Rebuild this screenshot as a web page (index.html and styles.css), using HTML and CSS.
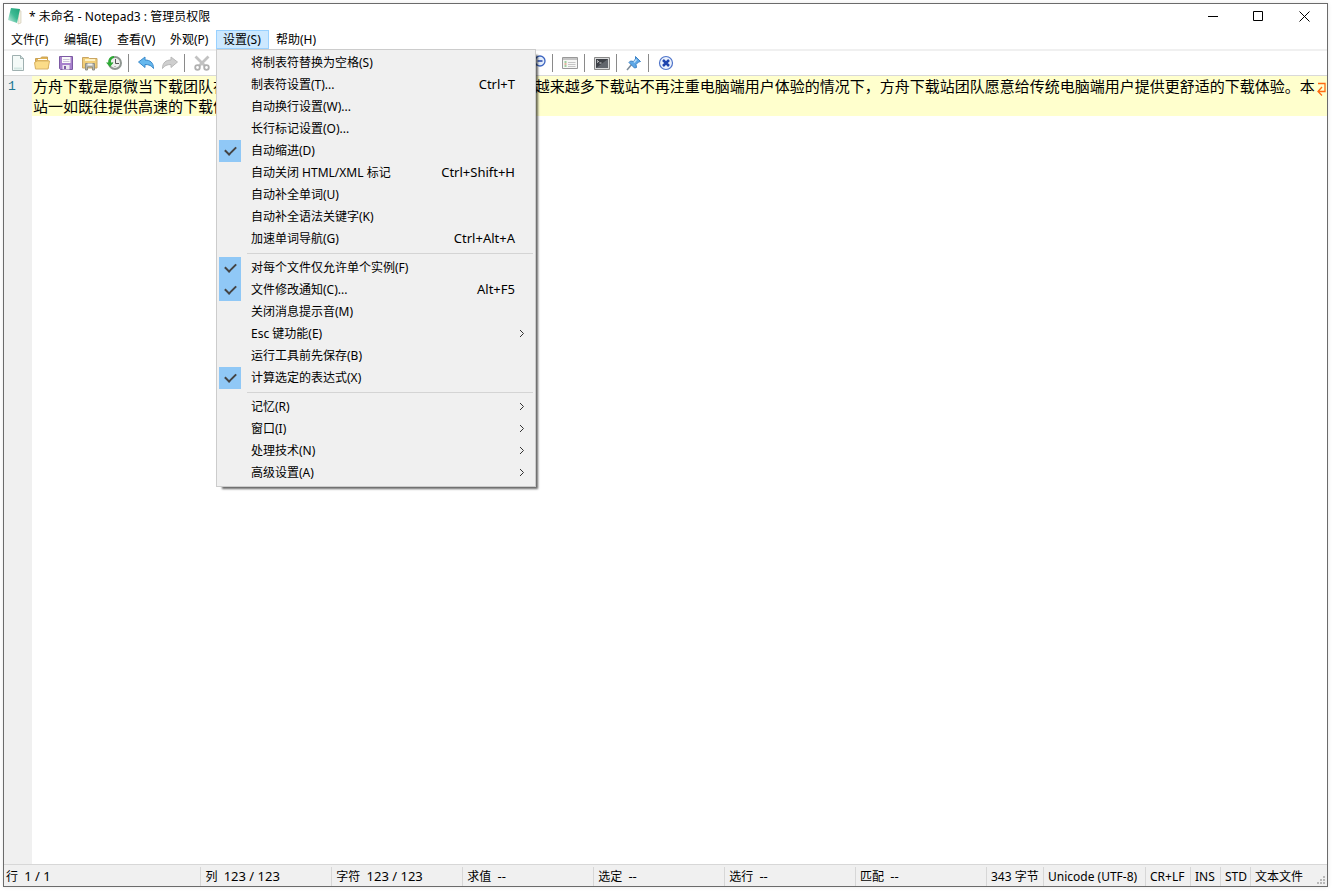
FILE: index.html
```
<!DOCTYPE html>
<html lang="zh-CN">
<head>
  <meta charset="UTF-8">
  <meta name="viewport" content="width=device-width, initial-scale=1.0">
  <title>* 未命名 - Notepad3</title>
  <link rel="stylesheet" href="styles.css">
</head>
<body>
  <div class="window">
    <header class="titlebar">
      <svg class="app-icon" width="16" height="18" viewBox="0 0 16 18">
        <defs>
          <linearGradient id="page" x1="1" y1="0" x2="0" y2="1">
            <stop offset="0" stop-color="#1ea077"/>
            <stop offset=".5" stop-color="#3dba93"/>
            <stop offset="1" stop-color="#d3efe6"/>
          </linearGradient>
        </defs>
        <path d="M12 3l2 1v12l-3 1z" fill="#f3efe2" stroke="#cfc8ae" stroke-width=".6"/>
        <path d="M4 1l9 1-3 14-9-3z" fill="url(#page)"/>
      </svg>
      <h1 class="title">* 未命名 - Notepad3 : 管理员权限</h1>
      <div class="window-buttons">
        <button aria-label="最小化"><svg width="11" height="11"><path d="M1 5.500h10" stroke="#000"/></svg></button>
        <button aria-label="最大化"><svg width="11" height="11"><path d="M.5 .5h9v9h-9z" fill="none" stroke="#000"/></svg></button>
        <button aria-label="关闭"><svg width="11" height="11"><path d="M.5 .5l10 10M10.500 .5l-10 10" stroke="#000"/></svg></button>
      </div>
    </header>

    <nav class="menubar">
      <div class="menu"><button class="menu-name">文件(F)</button></div>
      <div class="menu"><button class="menu-name">编辑(E)</button></div>
      <div class="menu"><button class="menu-name">查看(V)</button></div>
      <div class="menu"><button class="menu-name">外观(P)</button></div>
      <div class="menu open">
        <button class="menu-name" aria-expanded="true">设置(S)</button>
        <div class="dropdown">
          <button class="item">将制表符替换为空格(S)</button>
          <button class="item">制表符设置(T)...<kbd>Ctrl+T</kbd></button>
          <button class="item">自动换行设置(W)...</button>
          <button class="item">长行标记设置(O)...</button>
          <label class="item"><input type="checkbox" checked>自动缩进(D)</label>
          <label class="item"><input type="checkbox">自动关闭 HTML/XML 标记<kbd>Ctrl+Shift+H</kbd></label>
          <label class="item"><input type="checkbox">自动补全单词(U)</label>
          <label class="item"><input type="checkbox">自动补全语法关键字(K)</label>
          <label class="item"><input type="checkbox">加速单词导航(G)<kbd>Ctrl+Alt+A</kbd></label>
          <hr>
          <label class="item"><input type="checkbox" checked>对每个文件仅允许单个实例(F)</label>
          <label class="item"><input type="checkbox" checked>文件修改通知(C)...<kbd>Alt+F5</kbd></label>
          <label class="item"><input type="checkbox">关闭消息提示音(M)</label>
          <button class="item">Esc 键功能(E)<svg class="arrow" width="6" height="9"><path d="M1 1l3.500 3.500L1 8"/></svg></button>
          <label class="item"><input type="checkbox">运行工具前先保存(B)</label>
          <label class="item"><input type="checkbox" checked>计算选定的表达式(X)</label>
          <hr>
          <button class="item">记忆(R)<svg class="arrow" width="6" height="9"><path d="M1 1l3.500 3.500L1 8"/></svg></button>
          <button class="item">窗口(I)<svg class="arrow" width="6" height="9"><path d="M1 1l3.500 3.500L1 8"/></svg></button>
          <button class="item">处理技术(N)<svg class="arrow" width="6" height="9"><path d="M1 1l3.500 3.500L1 8"/></svg></button>
          <button class="item">高级设置(A)<svg class="arrow" width="6" height="9"><path d="M1 1l3.500 3.500L1 8"/></svg></button>
        </div>
      </div>
      <div class="menu"><button class="menu-name">帮助(H)</button></div>
    </nav>

    <div class="toolbar">
      <button aria-label="新建"><svg viewBox="0 0 16 16">
        <path d="M2.500 .5h8l3 3v12h-11z" fill="#f4faf8" stroke="#9fb0b0"/>
        <path d="M10.500 .5v3h3" fill="#cfe0df" stroke="#9fb0b0"/>
        <path d="M4 13.500h8" stroke="#d5e8e4" stroke-width="2"/>
      </svg></button>
      <button aria-label="打开"><svg viewBox="0 0 16 16">
        <path d="M1.500 13V3.500h5l1-1.500h6v3l1 1v7z" fill="#e2b454" stroke="#c9a256"/>
        <path d="M4 4.500h9" stroke="#fff"/>
        <path d="M.5 7.500l3-1.500h12l-1.500 8h-12.500z" fill="#fbdc88" stroke="#d8b366"/>
      </svg></button>
      <button aria-label="保存"><svg viewBox="0 0 16 16">
        <path d="M1.500 1.500h13v13h-12l-1-1z" fill="#a780cc" stroke="#7c5aa3"/>
        <path d="M4 2h8.500v6H4z" fill="#fafafa"/>
        <path d="M5 4.500h6.500M5 6.500h6.500" stroke="#ccc4d8"/>
        <path d="M4.500 10h7v4.500h-7z" fill="#ece8f0"/>
        <path d="M6 11h2v3H6z" fill="#7c5aa3"/>
      </svg></button>
      <button aria-label="另存为"><svg viewBox="0 0 16 16">
        <path d="M.5 13V2.500h6l1 1h7.500v9.500z" fill="#f0cd78" stroke="#c9a563"/>
        <path d="M3 5h10" stroke="#fff2c4" stroke-width="2"/>
        <path d="M3.500 15V8.500h9V15h-2v-3h-5v3z" fill="#b4b4ad" stroke="#919184"/>
        <path d="M5.500 9.500h5" stroke="#f2f2ef" stroke-width="2"/>
      </svg></button>
      <button aria-label="还原"><svg viewBox="0 0 16 16">
        <circle cx="9" cy="8" r="6" fill="#eeefed" stroke="#8f9691" stroke-width="2"/>
        <path d="M9.500 4v4.500H13" fill="none" stroke="#555"/>
        <path d="M9 11v1M6 8h1" stroke="#888"/>
        <path d="M8 1C4 1 2 4 2.500 7.500H0L4 12l3.500-4.500H5C4.500 5 6 3 8 3z" fill="#2dab35"/>
      </svg></button>
      <span class="sep"></span>
      <button aria-label="撤销"><svg viewBox="0 0 16 16">
        <path d="M.5 7L7 2v3c5 0 8.500 2.500 8.500 8.500C13.500 10.500 11 9.500 7 9.500v3z" fill="#65b8ee" stroke="#3b8acb"/>
      </svg></button>
      <button aria-label="重做"><svg viewBox="0 0 16 16">
        <path d="M15.500 7L9 2v3C4 5 .5 7.500 .5 13.500 2.500 10.500 5 9.500 9 9.500v3z" fill="#cfcfcf" stroke="#b8b8b8"/>
      </svg></button>
      <span class="sep"></span>
      <button aria-label="剪切"><svg viewBox="0 0 16 16">
        <path d="M1.500 1.500l9.500 9.500M14.500 1.500l-9.500 9.500" stroke="#c2c2c2" stroke-width="2.800"/>
        <circle cx="3.500" cy="12.500" r="2.300" fill="#fff" stroke="#b0b0b0" stroke-width="1.800"/>
        <circle cx="12.500" cy="12.500" r="2.300" fill="#fff" stroke="#b0b0b0" stroke-width="1.800"/>
      </svg></button>
      <span class="covered"></span>
      <button aria-label="缩小"><svg viewBox="0 0 16 16">
        <path d="M6 10l-4.500 4.500" stroke="#7a6a50" stroke-width="2"/>
        <circle cx="10" cy="6" r="5" fill="#e3edfb" stroke="#3c64c0" stroke-width="1.300"/>
        <path d="M7.500 6h5" stroke="#2445a8" stroke-width="1.500"/>
      </svg></button>
      <span class="sep"></span>
      <button aria-label="配置方案"><svg viewBox="0 0 16 16">
        <path d="M.5 2.500h15v11H.5z" fill="#f7f7f5" stroke="#999"/>
        <path d="M1 4h14" stroke="#c4c4c4" stroke-width="2"/>
        <path d="M2.500 7h2" stroke="#49a84f"/><path d="M2.500 9h2" stroke="#d0704c"/><path d="M2.500 11h2" stroke="#49a84f"/>
        <path d="M6 7.500h7.500M6 9.500h7.500M6 11.500h7.500" stroke="#c5c5c5"/>
      </svg></button>
      <span class="sep"></span>
      <button aria-label="命令提示符"><svg viewBox="0 0 16 16">
        <path d="M.5 2.500h15v12H.5z" fill="#d9dadb" stroke="#888"/>
        <path d="M2 4h12v9H2z" fill="#3d4046"/>
        <path d="M2 13L14 4v9z" fill="#62666d"/>
        <path d="M3 5.500l1.500 1-1.500 1M5.500 8h2" fill="none" stroke="#fff" stroke-width=".8"/>
      </svg></button>
      <span class="sep"></span>
      <button aria-label="置顶"><svg viewBox="0 0 16 16">
        <path d="M1 15l5-6" stroke="#7d8b99" stroke-width="1.500"/>
        <path d="M9.500 1.500l5 5-2 .5-2.500 2.500 .5 3-2 .5L3 7.500 4.500 6l3 .5L9.500 4z" fill="#5fa8e6" stroke="#3d82c6"/>
        <path d="M10.500 4.500L8 7.500" stroke="#b9dcf8" stroke-width="1.500"/>
      </svg></button>
      <span class="sep"></span>
      <button aria-label="退出"><svg viewBox="0 0 16 16">
        <circle cx="8" cy="8" r="6.500" fill="#eaf1fc" stroke="#4f74ca" stroke-width="1.200"/>
        <path d="M5 5l6 6M11 5l-6 6" stroke="#1d43ae" stroke-width="2.500"/>
      </svg></button>
    </div>

    <main class="editor">
      <div class="line-numbers">1</div>
      <textarea class="text" aria-label="文本" spellcheck="false">方舟下载是原微当下载团队在 2023年全新推出的综合软件下载站点，在这个越来越多下载站不再注重电脑端用户体验的情况下，方舟下载站团队愿意给传统电脑端用户提供更舒适的下载体验。本站一如既往提供高速的下载体验，感谢大家支持。</textarea>
      <svg class="wrap-mark" width="9" height="14" viewBox="0 0 9 14">
        <path d="M1 1.500h7v8H1M5 5L1 9.500l4 4" fill="none" stroke="#ff6a10" stroke-width="1.300"/>
      </svg>
    </main>

    <footer class="statusbar">
      <span class="cell first">行&nbsp; <span class="value">1 / 1</span></span>
      <span class="cell">列&nbsp; <span class="value">123 / 123</span></span>
      <span class="cell">字符&nbsp; <span class="value">123 / 123</span></span>
      <span class="cell">求值&nbsp; <span class="value">--</span></span>
      <span class="cell">选定&nbsp; <span class="value">--</span></span>
      <span class="cell">选行&nbsp; <span class="value">--</span></span>
      <span class="cell">匹配&nbsp; <span class="value">--</span></span>
      <span class="cell">343 字节</span>
      <span class="cell">Unicode (UTF-8)</span>
      <span class="cell">CR+LF</span>
      <span class="cell">INS</span>
      <span class="cell">STD</span>
      <span class="cell">文本文件</span>
      <svg class="grip" width="9" height="9" fill="#b8b8b8">
        <path d="M6 0h2v2H6zM3 3h2v2H3zM6 3h2v2H6zM0 6h2v2H0zM3 6h2v2H3zM6 6h2v2H6z"/>
      </svg>
    </footer>
  </div>
</body>
</html>
```
FILE: styles.css
```
* {
  margin: 0;
  padding: 0;
  box-sizing: border-box;
}

body {
  height: 100vh;
  padding: 3px 4px 4px 3px;
  background: #fff;
  color: #000;
  font-family: 'Noto Sans', 'Noto Sans CJK SC', sans-serif;
  font-size: 12px;
}

button {
  border: none;
  background: none;
  color: inherit;
  font: inherit;
  text-align: left;
}

.window {
  height: 100%;
  display: flex;
  flex-direction: column;
  border: 1px solid #6b6b6b;
  box-shadow: 0 0 4px rgba(0, 0, 0, 0.1);
}

/* title bar */
.titlebar {
  display: flex;
  align-items: center;
  height: 26px;
  padding: 0 0 2px 3px;
}

.title {
  flex: 1;
  margin-left: 6px;
  font-size: 12px;
  font-weight: normal;
}

.window-buttons {
  display: flex;
}

.window-buttons button {
  display: flex;
  align-items: center;
  justify-content: center;
  width: 46px;
  height: 24px;
}

/* menus */
.menubar {
  display: flex;
  height: 20px;
  border-bottom: 1px solid #f0f0f0;
}

.menu {
  position: relative;
}

.menu-name {
  display: block;
  min-width: 53px;
  height: 19px;
  padding: 0 6px;
  border: 1px solid transparent;
  line-height: 18px;
  white-space: nowrap;
}

.menu.open .menu-name {
  background: #cce8ff;
  border-color: #99d1ff;
}

.dropdown {
  position: absolute;
  top: 100%;
  left: 0;
  z-index: 1;
  width: 320px;
  padding: 2px;
  background: #f0f0f0;
  border: 1px solid #ccc;
  box-shadow: 4px 4px 2px -2px rgba(0, 0, 0, 0.6);
}

.item {
  display: flex;
  align-items: flex-start;
  width: 100%;
  height: 22px;
  padding: 0 18px 0 32px;
  line-height: 21px;
  white-space: nowrap;
}

.item kbd {
  margin-left: auto;
  font: inherit;
  font-size: 13px;
}

.item input {
  appearance: none;
  display: flex;
  align-items: center;
  justify-content: center;
  width: 22px;
  height: 22px;
  margin: 0 10px 0 -32px;
}

.item input:checked {
  background: #90c8f6;
}

.item input:checked::after {
  content: '';
  width: 9px;
  height: 5px;
  margin-bottom: 4px;
  border: solid #444;
  border-width: 0 0 2px 2px;
  transform: rotate(-45deg);
}

.arrow {
  margin: 6px -10px 0 auto;
  fill: none;
  stroke: #333;
}

.dropdown hr {
  height: 1px;
  margin: 3px 0 3px 28px;
  border: none;
  background: #d4d4d4;
}

/* toolbar */
.toolbar {
  display: flex;
  align-items: center;
  height: 26px;
  padding-left: 2px;
  border-top: 1px solid #f0f0f0;
  border-bottom: 1px solid #d9d9d9;
}

.toolbar button {
  display: flex;
  justify-content: center;
  width: 24px;
}

.toolbar button svg {
  width: 16px;
  height: 16px;
}

.sep {
  width: 1px;
  height: 18px;
  margin: 0 5px 0 2px;
  background: #8a8a8a;
}

/* stretch of the toolbar below the open menu */
.covered {
  width: 312px;
}

/* editor */
.editor {
  position: relative;
  flex: 1;
  display: flex;
}

.line-numbers {
  width: 28px;
  padding: 0 4px;
  background: #f0f0f0;
  color: #237893;
  font-family: 'Liberation Mono', monospace;
  font-size: 13px;
  line-height: 22px;
}

.text {
  flex: 1;
  padding: 0 10px 0 1px;
  border: none;
  outline: none;
  resize: none;
  overflow: hidden;
  background: linear-gradient(#ffffcd 40px, #fff 40px);
  color: #000;
  font-family: 'Noto Sans CJK SC', sans-serif;
  font-size: 15px;
  line-height: 20px;
}

.wrap-mark {
  position: absolute;
  top: 6px;
  right: 1px;
}

/* status bar */
.statusbar {
  position: relative;
  display: grid;
  grid-template-columns: 3fr repeat(6, 2fr) 57px 102px 45px 30px 30px 77px;
  align-items: center;
  height: 22px;
  padding-top: 1px;
  background: #f0f0f0;
  border-top: 1px solid #d7d7d7;
}

.cell {
  height: 19px;
  padding-left: 4px;
  border-left: 1px solid #d7d7d7;
  line-height: 19px;
  white-space: nowrap;
}

.cell.first {
  padding-left: 2px;
  border-left: none;
}

.value {
  font-size: 13px;
}

.grip {
  position: absolute;
  right: 1px;
  bottom: 1px;
}
```
